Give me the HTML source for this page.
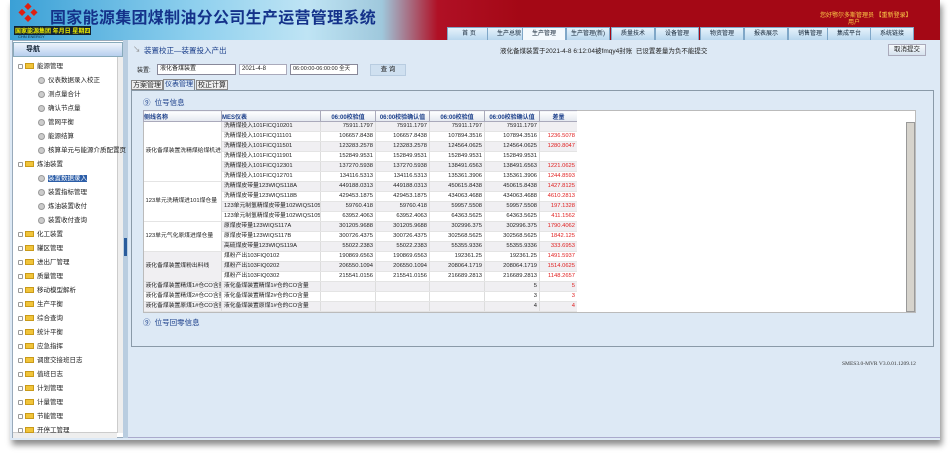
<!DOCTYPE html>
<html><head><meta charset="utf-8"><style>
*{margin:0;padding:0;box-sizing:border-box}
body{width:950px;height:460px;background:#fff;position:relative;overflow:hidden;font-family:"Liberation Sans","Noto Sans CJK SC",sans-serif;font-size:7px;color:#222}
.a{position:absolute}
#win{left:10px;top:0;width:930px;height:440px;background:#dde9f5;box-shadow:2px 5px 6px rgba(0,0,0,.45)}
#hdr{left:10px;top:0;width:930px;height:40px;background:linear-gradient(90deg,#3aa0d6 0%,#8fd0ee 20%,#bfe4f4 32%,#9fc8dc 40%,#b01025 46%,#a40815 55%,#a40815 100%)}
.tab{position:absolute;top:27px;height:13px;width:44px;background:linear-gradient(#e6f2fb,#b9d7ee);border:1px solid #7fa7c8;border-bottom:none;font-size:6px;text-align:center;line-height:12px;color:#123}
.tab.on{background:#f4f9fd}
#side{left:12px;top:40px;width:112px;height:398px;background:#fff;border:1px solid #9ab}
.ti{position:absolute;font-size:6.5px;line-height:10px;height:10px;white-space:nowrap}
.fold{display:inline-block;width:9px;height:6px;background:#f1c43a;border:1px solid #c99a1a;vertical-align:middle;margin-right:3px}
.pm{display:inline-block;width:5px;height:5px;border:1px solid #999;vertical-align:middle;margin-right:2px;border-radius:1px}
.gear{display:inline-block;width:7px;height:7px;border-radius:50%;background:#ccc;border:1px solid #999;vertical-align:middle;margin-right:3px}
table{border-collapse:collapse;font-size:5.8px}
td{height:10px;line-height:9px;border-right:1px solid #ddd;border-bottom:1px solid #e4e4e4;white-space:nowrap;overflow:hidden;padding:0 2px}
td.n{text-align:right}
td.r{text-align:right;color:#e02020}
tr:nth-child(even) td{background:#f0eff2}
th{height:11px;background:linear-gradient(#fff,#e4e8ef);border:1px solid #aab;color:#1a3e8a;font-size:6px;font-weight:bold;text-align:center}
</style></head><body>
<div id="win" class="a"></div>
<div id="hdr" class="a"></div>
<div class="a" style="left:18px;top:4px;width:28px;height:20px;color:#e02010;font-size:20px;font-weight:bold;line-height:20px">❖</div>
<div class="a" style="left:50px;top:4px;font-size:16px;font-weight:bold;color:#14328a;letter-spacing:.3px;white-space:nowrap">国家能源集团煤制油分公司生产运营管理系统</div>
<div class="a" style="left:14px;top:26px;font-size:6px;color:#ee0;font-weight:bold;background:#123;padding:0 1px">国家能源集团 年月日 星期四</div>
<div class="a" style="left:18px;top:34px;font-size:4px;color:#123">CHN ENERGY</div>
<div class="a" style="left:820px;top:10px;font-size:6px;color:#ffd24a;white-space:nowrap">您好鄂尔多斯管理员 【重新登录】</div>
<div class="a" style="left:848px;top:17px;font-size:6px;color:#ffd24a">用户</div>
<div class="tab" style="left:447px">首 页</div>
<div class="tab" style="left:487px">生产总貌</div>
<div class="tab on" style="left:522px">生产管理</div>
<div class="tab" style="left:566px">生产管理(新)</div>
<div class="tab" style="left:611px">质量技术</div>
<div class="tab" style="left:655px">设备管理</div>
<div class="tab" style="left:700px">物资管理</div>
<div class="tab" style="left:744px">报表展示</div>
<div class="tab" style="left:788px">销售管理</div>
<div class="tab" style="left:827px">集成平台</div>
<div class="tab" style="left:870px">系统链接</div>

<div id="side" class="a"></div>
<div class="a" style="left:13px;top:42px;width:110px;height:15px;background:linear-gradient(#eef4fc,#b8cfee);border:1px solid #8ab;font-size:7px;font-weight:bold;color:#123;line-height:13px;padding-left:12px">导航</div>
<div class="a" style="left:117px;top:57px;width:7px;height:376px;background:#eee;border-left:1px solid #ccc"></div>
<div class="a" style="left:13px;top:432px;width:104px;height:6px;background:#eee;border-top:1px solid #ccc"></div>
<div class="a" style="left:123px;top:40px;width:5px;height:398px;background:#b9cde0"></div>
<div class="a" style="left:124px;top:238px;width:3px;height:18px;background:#2a5c9c"></div>

<div class="ti" style="left:18px;top:62px"><span class="pm"></span><span class="fold"></span>能源管理</div>
<div class="ti" style="left:38px;top:76px"><span class="gear"></span>仪表数据录入校正</div>
<div class="ti" style="left:38px;top:90px"><span class="gear"></span>测点量合计</div>
<div class="ti" style="left:38px;top:104px"><span class="gear"></span>确认节点量</div>
<div class="ti" style="left:38px;top:118px"><span class="gear"></span>管网平衡</div>
<div class="ti" style="left:38px;top:132px"><span class="gear"></span>能源结算</div>
<div class="ti" style="left:38px;top:146px"><span class="gear"></span>核算单元与能源介质配置页</div>
<div class="ti" style="left:18px;top:160px"><span class="pm"></span><span class="fold"></span>炼油装置</div>
<div class="ti" style="left:38px;top:174px"><span class="gear"></span><span style="background:#2c5ea8;color:#fff">装置数据录入</span></div>
<div class="ti" style="left:38px;top:188px"><span class="gear"></span>装置指标管理</div>
<div class="ti" style="left:38px;top:202px"><span class="gear"></span>炼油装置收付</div>
<div class="ti" style="left:38px;top:216px"><span class="gear"></span>装置收付查询</div>
<div class="ti" style="left:18px;top:230px"><span class="pm"></span><span class="fold"></span>化工装置</div>
<div class="ti" style="left:18px;top:244px"><span class="pm"></span><span class="fold"></span>罐区管理</div>
<div class="ti" style="left:18px;top:258px"><span class="pm"></span><span class="fold"></span>进出厂管理</div>
<div class="ti" style="left:18px;top:272px"><span class="pm"></span><span class="fold"></span>质量管理</div>
<div class="ti" style="left:18px;top:286px"><span class="pm"></span><span class="fold"></span>移动模型解析</div>
<div class="ti" style="left:18px;top:300px"><span class="pm"></span><span class="fold"></span>生产平衡</div>
<div class="ti" style="left:18px;top:314px"><span class="pm"></span><span class="fold"></span>综合查询</div>
<div class="ti" style="left:18px;top:328px"><span class="pm"></span><span class="fold"></span>统计平衡</div>
<div class="ti" style="left:18px;top:342px"><span class="pm"></span><span class="fold"></span>应急指挥</div>
<div class="ti" style="left:18px;top:356px"><span class="pm"></span><span class="fold"></span>调度交接班日志</div>
<div class="ti" style="left:18px;top:370px"><span class="pm"></span><span class="fold"></span>值班日志</div>
<div class="ti" style="left:18px;top:384px"><span class="pm"></span><span class="fold"></span>计划管理</div>
<div class="ti" style="left:18px;top:398px"><span class="pm"></span><span class="fold"></span>计量管理</div>
<div class="ti" style="left:18px;top:412px"><span class="pm"></span><span class="fold"></span>节能管理</div>
<div class="ti" style="left:18px;top:426px"><span class="pm"></span><span class="fold"></span>开停工管理</div>

<div class="a" style="left:133px;top:44px;font-size:7.5px;color:#888">↘</div>
<div class="a" style="left:144px;top:45px;font-size:7.5px;color:#1a3e8a">装置校正—装置投入产出</div>
<div class="a" style="left:500px;top:45px;font-size:6.5px;white-space:nowrap">液化备煤装置于2021-4-8 6:12:04被fmqy4封账 &nbsp;已设置差量为负不能提交</div>
<div class="a" style="left:888px;top:44px;width:38px;height:12px;background:linear-gradient(#f6f9fc,#d6e2ee);border:1px solid #aab;font-size:6.5px;text-align:center;line-height:10px">取消提交</div>

<div class="a" style="left:137px;top:65px;font-size:6px">装置:</div>
<div class="a" style="left:157px;top:64px;width:79px;height:11px;background:#fff;border:1px solid #889;font-size:6px;line-height:9px;padding-left:2px">液化备煤装置</div>
<div class="a" style="left:239px;top:64px;width:48px;height:11px;background:#fff;border:1px solid #aab;font-size:6px;line-height:9px;padding-left:2px">2021-4-8</div>
<div class="a" style="left:290px;top:64px;width:68px;height:11px;background:#fff;border:1px solid #889;font-size:5.5px;line-height:9px;padding-left:2px;white-space:nowrap">06:00:00-06:00:00 全天</div>
<div class="a" style="left:370px;top:64px;width:36px;height:12px;background:#cfe0f0;border:1px solid #b8cce0;font-size:6.5px;text-align:center;line-height:10px">查 询</div>

<div class="a" style="left:131px;top:80px;height:10px;font-size:7px;line-height:9px;white-space:nowrap;border:1px solid #888;background:#eee;padding:0 1px">方案管理</div>
<div class="a" style="left:163px;top:79px;height:11px;font-size:7px;line-height:10px;color:#1a3e8a;border:1px solid #888;border-bottom:none;background:#dde9f5;padding:0 1px">仪表管理</div>
<div class="a" style="left:196px;top:80px;height:10px;font-size:7px;line-height:9px;border:1px solid #888;background:#eee;padding:0 1px">校正计算</div>
<div class="a" style="left:131px;top:90px;width:803px;height:257px;border:1px solid #8a9aa8"></div>
<div class="a" style="left:143px;top:97px;font-size:7.5px;color:#1a3e8a">⑨ &nbsp;位号信息</div>
<div class="a" style="left:143px;top:110px;width:773px;height:203px;background:#fff;border:1px solid #bbb"></div>
<div class="a" style="left:906px;top:122px;width:9px;height:190px;background:#d6d3cc;border:1px solid #999"></div>

<div class="a" style="left:143px;top:110px;width:434px;height:202px;overflow:hidden">
<table style="width:434px;table-layout:fixed">
<colgroup><col style="width:78px"><col style="width:99px"><col style="width:55px"><col style="width:54px"><col style="width:55px"><col style="width:55px"><col style="width:38px"></colgroup>
<tr><th style="text-align:left">侧线名称</th><th style="text-align:left">MES仪表</th><th>06:00校验值</th><th>06:00校验确认值</th><th>06:00校验值</th><th>06:00校验确认值</th><th>差量</th></tr>
<tr><td rowspan="6" style="background:#fff">液化备煤装置洗精煤给煤机进</td><td>洗精煤投入101FICQ10201</td><td class="n">75911.1797</td><td class="n">75911.1797</td><td class="n">75911.1797</td><td class="n">75911.1797</td><td class="r"></td></tr>
<tr><td>洗精煤投入101FICQ11101</td><td class="n">106657.8438</td><td class="n">106657.8438</td><td class="n">107894.3516</td><td class="n">107894.3516</td><td class="r">1236.5078</td></tr>
<tr><td>洗精煤投入101FICQ11501</td><td class="n">123283.2578</td><td class="n">123283.2578</td><td class="n">124564.0625</td><td class="n">124564.0625</td><td class="r">1280.8047</td></tr>
<tr><td>洗精煤投入101FICQ11901</td><td class="n">152849.9531</td><td class="n">152849.9531</td><td class="n">152849.9531</td><td class="n">152849.9531</td><td class="r"></td></tr>
<tr><td>洗精煤投入101FICQ12301</td><td class="n">137270.5938</td><td class="n">137270.5938</td><td class="n">138491.6563</td><td class="n">138491.6563</td><td class="r">1221.0625</td></tr>
<tr><td>洗精煤投入101FICQ12701</td><td class="n">134116.5313</td><td class="n">134116.5313</td><td class="n">135361.3906</td><td class="n">135361.3906</td><td class="r">1244.8593</td></tr>
<tr><td rowspan="4" style="background:#fff">123单元洗精煤进101煤仓量</td><td>洗精煤皮带量123WIQS118A</td><td class="n">449188.0313</td><td class="n">449188.0313</td><td class="n">450615.8438</td><td class="n">450615.8438</td><td class="r">1427.8125</td></tr>
<tr><td>洗精煤皮带量123WIQS118B</td><td class="n">429453.1875</td><td class="n">429453.1875</td><td class="n">434063.4688</td><td class="n">434063.4688</td><td class="r">4610.2813</td></tr>
<tr><td>123单元制氢精煤皮带量102WIQS105A</td><td class="n">59760.418</td><td class="n">59760.418</td><td class="n">59957.5508</td><td class="n">59957.5508</td><td class="r">197.1328</td></tr>
<tr><td>123单元制氢精煤皮带量102WIQS105B</td><td class="n">63952.4063</td><td class="n">63952.4063</td><td class="n">64363.5625</td><td class="n">64363.5625</td><td class="r">411.1562</td></tr>
<tr><td rowspan="3" style="background:#fff">123单元气化原煤进煤仓量</td><td>原煤皮带量123WIQS117A</td><td class="n">301205.9688</td><td class="n">301205.9688</td><td class="n">302996.375</td><td class="n">302996.375</td><td class="r">1790.4062</td></tr>
<tr><td>原煤皮带量123WIQS117B</td><td class="n">300726.4375</td><td class="n">300726.4375</td><td class="n">302568.5625</td><td class="n">302568.5625</td><td class="r">1842.125</td></tr>
<tr><td>高硫煤皮带量123WIQS119A</td><td class="n">55022.2383</td><td class="n">55022.2383</td><td class="n">55355.9336</td><td class="n">55355.9336</td><td class="r">333.6953</td></tr>
<tr><td rowspan="3" style="background:#f0eff2">液化备煤装置煤粉出料线</td><td>煤粉产出103FIQ0102</td><td class="n">190869.6563</td><td class="n">190869.6563</td><td class="n">192361.25</td><td class="n">192361.25</td><td class="r">1491.5937</td></tr>
<tr><td>煤粉产出103FIQ0202</td><td class="n">206550.1094</td><td class="n">206550.1094</td><td class="n">208064.1719</td><td class="n">208064.1719</td><td class="r">1514.0625</td></tr>
<tr><td>煤粉产出103FIQ0302</td><td class="n">215541.0156</td><td class="n">215541.0156</td><td class="n">216689.2813</td><td class="n">216689.2813</td><td class="r">1148.2657</td></tr>
<tr><td>液化备煤装置精煤1#仓CO含量</td><td>液化备煤装置精煤1#仓的CO含量</td><td></td><td></td><td></td><td class="n">5</td><td class="r">5</td></tr>
<tr><td>液化备煤装置精煤2#仓CO含量</td><td>液化备煤装置精煤2#仓的CO含量</td><td></td><td></td><td></td><td class="n">3</td><td class="r">3</td></tr>
<tr><td>液化备煤装置原煤1#仓CO含量</td><td>液化备煤装置原煤1#仓的CO含量</td><td></td><td></td><td></td><td class="n">4</td><td class="r">4</td></tr>
<tr><td>液化备煤装置原煤2#仓CO含量</td><td>液化备煤装置原煤2#仓的CO含量</td><td></td><td></td><td></td><td class="n">6</td><td class="r">6</td></tr>
</table></div>

<div class="a" style="left:143px;top:317px;font-size:7.5px;color:#1a3e8a">⑨ &nbsp;位号回零信息</div>
<div class="a" style="left:842px;top:361px;font-size:5.5px;font-family:'Liberation Serif',serif;color:#333;white-space:nowrap">SMES3.0-MVR V3.0.01.1209.12</div>
<div class="a" style="left:128px;top:437px;width:812px;height:1px;background:#aac"></div>
</body></html>
